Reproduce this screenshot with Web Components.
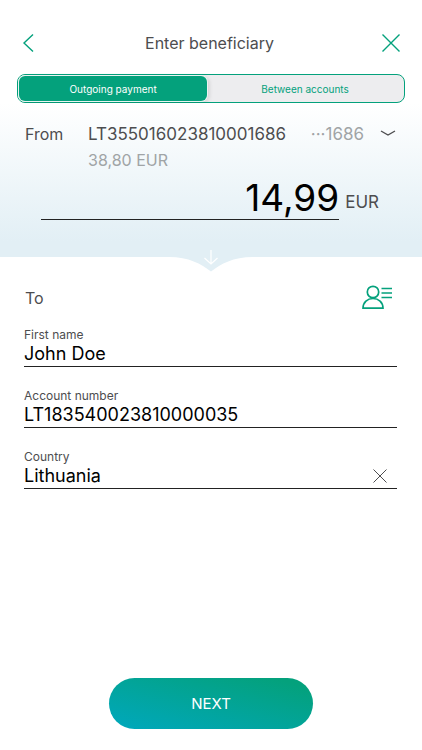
<!DOCTYPE html>
<html lang="en">
  <head>
    <meta charset="utf-8">
    <meta name="viewport" content="width=device-width, initial-scale=1">
    <title>Enter beneficiary</title>
    <style>
      :root {
        --green: #04a17c;
        --teal: #00a8bd;
        --text: #4d4d4f;
        --muted: #a0a4a6;
        --sky: #e2eff5;
      }
      body {
        margin: 0;
        background: #fff;
        color: var(--text);
        font-family: Inter, "Liberation Sans", sans-serif;
        font-size: 16px;
        line-height: 20px;
      }
    </style>
  </head>
  <body>

    <template id="payment-screen">
      <style>
        :host {
          display: flex;
          flex-direction: column;
          box-sizing: border-box;
          min-height: 100vh;
          padding-bottom: 21px;
        }
        ::slotted(beneficiary-form) {
          flex: 1;
        }
      </style>
      <slot></slot>
    </template>

    <template id="screen-header">
      <style>
        :host {
          display: grid;
          grid-template-columns: 24px 1fr 24px;
          align-items: center;
          padding: 31px 19px 19px 16px;
        }
        h1 {
          margin: 0;
          font-size: 16px;
          font-weight: 400;
          text-align: center;
        }
        button {
          display: flex;
          justify-content: center;
          padding: 0;
          border: 0;
          background: none;
          color: var(--green);
        }
        svg {
          fill: none;
          stroke: currentColor;
          stroke-width: 1.4;
        }
      </style>
      <button type="button" aria-label="Back">
        <svg width="24" height="24"><path d="M17 3.5 8 12l9 8.5"/></svg>
      </button>
      <h1><slot></slot></h1>
      <button type="button" aria-label="Close">
        <svg width="24" height="24"><path d="M3.500 3.500l17 17M20.500 3.500l-17 17"/></svg>
      </button>
    </template>

    <template id="payment-tabs">
      <style>
        :host {
          display: grid;
          grid-template-columns: 49% 1fr;
          margin: 0 17px;
          padding: 1px;
          border: 1px solid var(--green);
          border-radius: 8px;
          background: #ededef;
        }
        button {
          height: 25px;
          padding: 0;
          border: 0;
          border-radius: 6px;
          background: none;
          color: var(--green);
          font: inherit;
          font-size: 10px;
        }
        button[aria-pressed=true] {
          background: var(--green);
          box-shadow: 0 0 0 1px #e8f5f1, 2px 1px 4px rgba(0, 0, 0, .15);
          color: #fff;
        }
      </style>
      <button type="button" aria-pressed="true"><slot name="first"></slot></button>
      <button type="button" aria-pressed="false"><slot name="second"></slot></button>
    </template>

    <template id="source-account">
      <style>
        :host {
          display: block;
          position: relative;
          padding: 21px 26px 37px 25px;
          background: linear-gradient(#fff, var(--sky) 90%);
        }
        .account {
          display: grid;
          grid-template-columns: 63px 1fr auto;
          row-gap: 6px;
          font-size: 17px;
        }
        .label {
          font-size: 16px;
        }
        button {
          display: flex;
          align-items: center;
          gap: 16px;
          padding: 0;
          border: 0;
          background: none;
          color: var(--muted);
          font: inherit;
        }
        .balance {
          grid-column: 2;
          color: var(--muted);
          font-size: 16px;
        }
        .amount {
          display: flex;
          align-items: flex-end;
          gap: 6px;
          margin: 8px 17px 0 16px;
        }
        input {
          flex: 1;
          min-width: 0;
          box-sizing: border-box;
          height: 42px;
          padding: 0 0 3px;
          border: 0;
          border-bottom: 1px solid #222;
          border-radius: 0;
          outline: 0;
          background: none;
          color: #000;
          font: inherit;
          font-size: 37px;
          text-align: right;
        }
        .currency {
          padding-bottom: 8px;
          font-size: 17px;
        }
        svg {
          fill: none;
          stroke: currentColor;
        }
        .chevron {
          color: var(--text);
        }
        /* pointer that hangs below the blue area */
        .notch {
          position: absolute;
          top: calc(100% - 8px);
          left: 50%;
          margin-left: -42px;
        }
      </style>
      <div class="account">
        <span class="label">From</span>
        <span><slot name="iban"></slot></span>
        <button type="button" aria-label="Choose account">
          <slot name="short"></slot>
          <svg class="chevron" width="16" height="12"><path d="M1 3l7 4 7-4" stroke-width="1.400"/></svg>
        </button>
        <span class="balance"><slot name="balance"></slot></span>
      </div>
      <div class="amount">
        <input type="text" inputmode="decimal" aria-label="Amount">
        <span class="currency">EUR</span>
      </div>
      <svg class="notch" width="84" height="24">
        <path d="M0 8C20 8 32 15 42 22.500 52 15 64 8 84 8V7H0z" fill="#e2eff5" stroke="none"/>
        <path d="M42 1v14M35.500 9l6.500 6 6.500-6" stroke="#fff" stroke-width="1.200"/>
      </svg>
    </template>

    <template id="beneficiary-form">
      <style>
        :host {
          display: flex;
          flex-direction: column;
          gap: 22px;
          padding: 27px 25px 20px 24px;
        }
        .top {
          display: flex;
          justify-content: space-between;
          align-items: center;
          margin: 0 5px -6px 1px;
        }
        h2 {
          margin: 0;
          font-size: 16px;
          font-weight: 400;
        }
        button {
          display: flex;
          padding: 0;
          border: 0;
          background: none;
          color: var(--green);
        }
        svg {
          fill: none;
          stroke: currentColor;
          stroke-width: 1.700;
        }
      </style>
      <div class="top">
        <h2>To</h2>
        <button type="button" aria-label="Saved beneficiaries">
          <svg width="32" height="28">
            <circle cx="13" cy="8" r="5.700"/>
            <path d="M3 24.200C3 18 7.500 14.500 13 14.500S23 18 23 24.200z"/>
            <path d="M21.500 4.500H32M21.500 9H32M21.500 13.500H32"/>
          </svg>
        </button>
      </div>
      <slot></slot>
    </template>

    <template id="line-field">
      <style>
        :host {
          display: block;
        }
        label {
          display: block;
          font-size: 12px;
          line-height: 14px;
        }
        .row {
          display: flex;
          align-items: center;
          height: 24px;
          border-bottom: 1px solid #222;
        }
        input {
          flex: 1;
          min-width: 0;
          padding: 0;
          border: 0;
          outline: 0;
          background: none;
          color: #000;
          font: inherit;
          font-size: 18px;
        }
        button {
          display: none;
          margin-right: 10px;
          padding: 0;
          border: 0;
          background: none;
          color: var(--text);
        }
        :host([clearable]) button {
          display: flex;
        }
      </style>
      <label for="value"></label>
      <div class="row">
        <input id="value" type="text">
        <button type="button" aria-label="Clear">
          <svg width="14" height="14" fill="none" stroke="currentColor"><path d="M.5.5l13 13M13.500.5l-13 13"/></svg>
        </button>
      </div>
    </template>

    <template id="next-button">
      <style>
        :host {
          display: flex;
          justify-content: center;
        }
        button {
          width: 204px;
          height: 51px;
          border: 0;
          border-radius: 26px;
          background: linear-gradient(15deg, var(--teal), var(--green) 90%);
          color: #fff;
          font: inherit;
          font-size: 15px;
        }
      </style>
      <button type="button"><slot></slot></button>
    </template>

    <payment-screen>
      <screen-header>Enter beneficiary</screen-header>
      <payment-tabs>
        <span slot="first">Outgoing payment</span>
        <span slot="second">Between accounts</span>
      </payment-tabs>
      <source-account amount="14,99">
        <span slot="iban">LT355016023810001686</span>
        <span slot="short">···1686</span>
        <span slot="balance">38,80 EUR</span>
      </source-account>
      <beneficiary-form>
        <line-field label="First name" value="John Doe"></line-field>
        <line-field label="Account number" value="LT183540023810000035"></line-field>
        <line-field label="Country" value="Lithuania" clearable></line-field>
      </beneficiary-form>
      <next-button>NEXT</next-button>
    </payment-screen>

    <script>
      // every element takes its shadow markup from the template of the same name
      class TemplateElement extends HTMLElement {
        constructor() {
          super();
          const template = document.getElementById(this.localName);
          this.attachShadow({mode: 'open'})
            .appendChild(template.content.cloneNode(true));
        }
      }

      customElements.define('payment-screen', class extends TemplateElement {});
      customElements.define('screen-header', class extends TemplateElement {});
      customElements.define('beneficiary-form', class extends TemplateElement {});
      customElements.define('next-button', class extends TemplateElement {});

      customElements.define('payment-tabs',
        class extends TemplateElement {
          connectedCallback() {
            const tabs = this.shadowRoot.querySelectorAll('button');
            tabs.forEach(tab => {
              tab.onclick = () => tabs.forEach(t => t.setAttribute('aria-pressed', t === tab));
            });
          }
      })

      customElements.define('source-account',
        class extends TemplateElement {
          connectedCallback() {
            this.shadowRoot.querySelector('input').value = this.getAttribute('amount');
          }
      })

      customElements.define('line-field',
        class extends TemplateElement {
          connectedCallback() {
            const input = this.shadowRoot.querySelector('input');
            this.shadowRoot.querySelector('label').textContent = this.getAttribute('label');
            input.value = this.getAttribute('value');
            this.shadowRoot.querySelector('button').onclick = () => {
              input.value = '';
              input.focus();
            };
          }
      })
    </script>
  </body>
</html>
